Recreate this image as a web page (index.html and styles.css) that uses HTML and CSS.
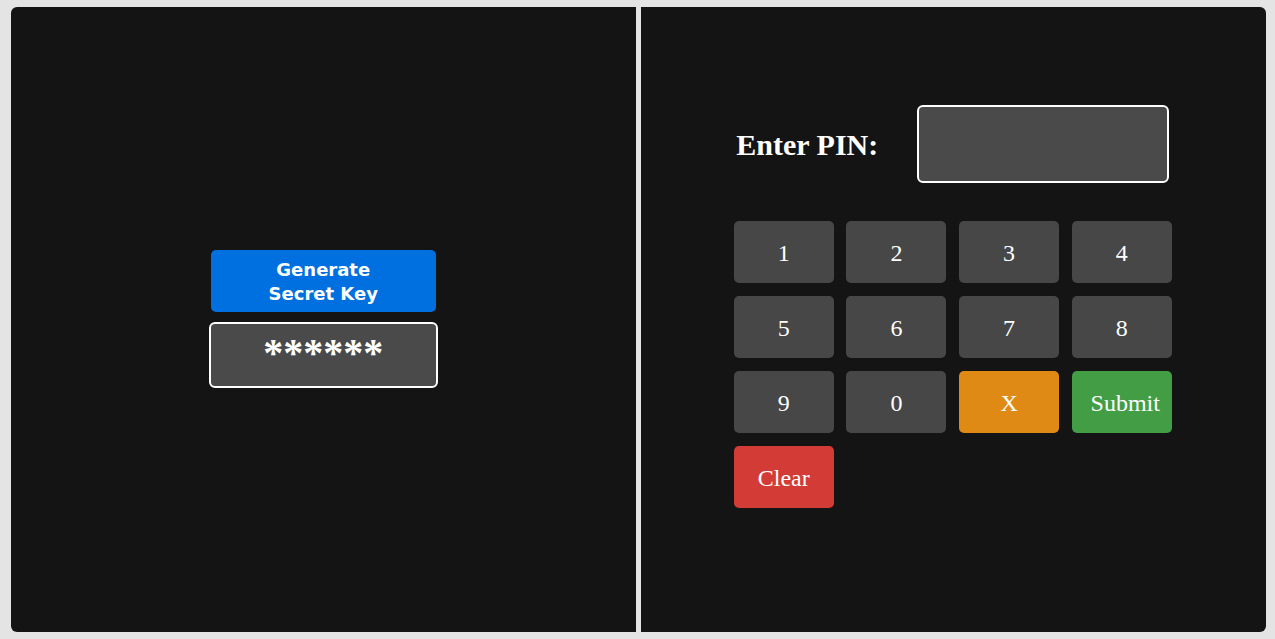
FILE: index.html
```html
<!DOCTYPE html>
<html>
<head>
<meta charset="utf-8">
<link rel="stylesheet" href="styles.css">
</head>
<body>
<div class="app">
  <section class="panel left">
    <button class="gen">Generate<br>Secret Key</button>
    <div class="secret">******</div>
  </section>
  <section class="panel right">
    <div class="pin-row">
      <label class="pin-label">Enter PIN:</label>
      <div class="pin-input"></div>
    </div>
    <div class="keypad">
      <button class="key">1</button>
      <button class="key">2</button>
      <button class="key">3</button>
      <button class="key">4</button>
      <button class="key">5</button>
      <button class="key">6</button>
      <button class="key">7</button>
      <button class="key">8</button>
      <button class="key">9</button>
      <button class="key">0</button>
      <button class="key x">X</button>
      <button class="key submit">Submit</button>
      <button class="key clear">Clear</button>
    </div>
  </section>
</div>
</body>
</html>
```

FILE: styles.css
```css
html, body {
  margin: 0;
  padding: 0;
  background: #e4e4e4;
}
body {
  padding: 7px 9px 7px 11px;
  font-family: "Liberation Serif", serif;
}
.app {
  display: flex;
  gap: 5px;
  height: 625px;
  border-radius: 6px;
  overflow: hidden;
}
.panel {
  flex: 1;
  background: #141414;
  display: flex;
  flex-direction: column;
  align-items: center;
  justify-content: center;
}
.left {
  padding-bottom: 1px;
  box-sizing: border-box;
}
.gen {
  width: 225px;
  height: 62px;
  background: #006fe0;
  color: #fff;
  border: none;
  border-radius: 5px;
  font-family: "DejaVu Sans", sans-serif;
  font-weight: bold;
  font-size: 18px;
  line-height: 24px;
  padding: 2px 0 0;
}
.secret {
  margin-top: 10px;
  width: 225px;
  height: 62px;
  background: #4a4a4a;
  border: 2px solid #fff;
  border-radius: 6px;
  color: #fff;
  font-size: 40px;
  font-weight: bold;
  line-height: 58px;
  text-align: center;
}
.right {
  padding: 0 1px 26px 0;
  box-sizing: border-box;
}
.pin-row {
  display: flex;
  align-items: center;
  gap: 39px;
}
.pin-label {
  color: #fff;
  font-weight: bold;
  font-size: 30px;
  padding-top: 2px;
}
.pin-input {
  width: 248px;
  height: 74px;
  background: #4a4a4a;
  border: 2px solid #fff;
  border-radius: 6px;
}
.keypad {
  margin-top: 38px;
  display: grid;
  grid-template-columns: repeat(4, 100px);
  grid-auto-rows: 62px;
  column-gap: 12.67px;
  row-gap: 13px;
}
.key {
  background: #474747;
  color: #fff;
  border: none;
  border-radius: 5px;
  font-family: "Liberation Serif", serif;
  font-size: 24px;
  padding: 3px 0 0;
}
.key.x { background: #e08a16; }
.key.submit { background: #439d45; padding-left: 7px; }
.key.clear { background: #d33b36; }
```
